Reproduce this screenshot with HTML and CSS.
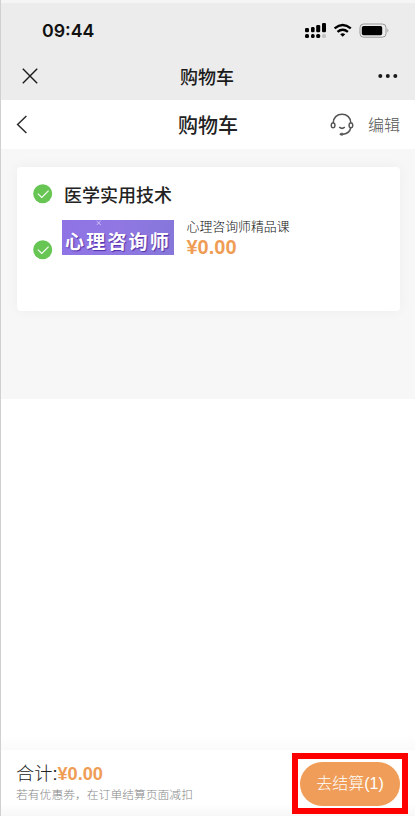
FILE: index.html
```html
<!DOCTYPE html>
<html lang="zh-CN">
<head>
<meta charset="utf-8">
<title>购物车</title>
<link rel="stylesheet" href="styles.css">
</head>
<body>
<div class="screen">
  <div class="status">
    <span class="time">09:44</span>
    <svg class="status-icons" width="86" height="18" viewBox="304 22 86 18">
      <g fill="#000">
        <rect x="305" y="28" width="4" height="4.2" rx="1.3"/><rect x="311" y="27" width="3.6" height="5.2" rx="1.3"/><rect x="316.2" y="25" width="4" height="7.2" rx="1.3"/><rect x="322" y="23" width="4" height="9.2" rx="1.3"/>
        <rect x="305" y="34" width="4" height="4" rx="1.5"/><rect x="311" y="34" width="3.6" height="4" rx="1.5"/><rect x="316.2" y="34" width="4" height="4" rx="1.5"/>
        <path d="M340.2 34.2Q342.7 32.2 345.2 34.2L342.7 36.8Z"/>
        <rect x="361.8" y="26" width="20.4" height="9.2" rx="1.8"/>
      </g>
      <rect x="322" y="34" width="4" height="4" rx="1.5" fill="#c4c4c4"/>
      <g fill="none" stroke="#000" stroke-width="2.4"><path d="M334.6 28.4Q342.7 21.8 350.8 28.4"/><path d="M337.5 31.9Q342.7 27.7 347.9 31.9"/></g>
      <rect x="360" y="24" width="26" height="13.2" rx="3.6" fill="none" stroke="#999"/>
      <path d="M387.4 28.6Q389.4 30.6 387.4 32.6Z" fill="#999"/>
    </svg>
  </div>
  <div class="titlebar">
    <svg width="16" height="16" viewBox="0 0 16 16"><path d="M.8.8 15.2 15.2M15.2.8.8 15.2" stroke="#1a1a1a" stroke-width="1.4"/></svg>
    <span class="app-title">购物车</span>
    <svg width="20" height="6" viewBox="0 0 20 6" fill="#1a1a1a"><circle cx="2.3" cy="3" r="2"/><circle cx="9.8" cy="3" r="2"/><circle cx="17.3" cy="3" r="2"/></svg>
  </div>
  <header class="header">
    <svg class="back" width="12" height="19" viewBox="0 0 12 19"><path d="M10.4 1 1.6 9.5l8.8 8.5" fill="none" stroke="#2b2b2b" stroke-width="1.5"/></svg>
    <h1>购物车</h1>
    <svg class="service" width="24" height="24" viewBox="0 0 24 24" fill="none" stroke="#555" stroke-width="1.5">
      <path d="M3.2 10C3.2 4.5 7 1.3 12 1.3S20.8 4.5 20.8 10M20.8 14.5C20 18.5 17 20.8 13.2 21.3"/>
      <rect x="1.3" y="10" width="3.6" height="4.8" rx="1.7"/><rect x="19.1" y="10" width="3.6" height="4.8" rx="1.7"/>
      <path d="M9.2 14Q12 16.8 14.8 14"/><ellipse cx="11.7" cy="21.2" rx="1.8" ry="1" fill="#555" stroke-width=".8"/>
    </svg>
    <span class="edit">编辑</span>
  </header>
  <main class="cart">
    <section class="card">
      <div class="group">
        <svg width="20" height="20" viewBox="0 0 20 20"><circle cx="9.7" cy="9.7" r="9.5" fill="#67c653"/><path d="m4.8 9.6 4 3.8 6.8-6.7" fill="none" stroke="#fff" stroke-width="1.1"/></svg>
        <h2>医学实用技术</h2>
      </div>
      <div class="item">
        <svg class="item-check" width="20" height="20" viewBox="0 0 20 20"><circle cx="9.7" cy="9.7" r="9.5" fill="#67c653"/><path d="m4.8 9.6 4 3.8 6.8-6.7" fill="none" stroke="#fff" stroke-width="1.1"/></svg>
        <div class="cover">心理咨询师
          <svg class="spark" width="6" height="6" viewBox="0 0 6 6" stroke="#d9cdfb" stroke-width=".8"><path d="M.5 1 5 5M4.8.5.8 5"/></svg>
        </div>
        <div class="info">
          <div class="name">心理咨询师精品课</div>
          <div class="price">¥0.00</div>
        </div>
      </div>
    </section>
  </main>
  <div class="blank"></div>
  <footer class="footer">
    <div class="summary">
      <div class="total">合计:<b>¥0.00</b></div>
      <div class="hint">若有优惠券，在订单结算页面减扣</div>
    </div>
    <div class="highlight"><button>去结算(1)</button></div>
  </footer>
</div>
</body>
</html>
```

FILE: styles.css
```css
* { box-sizing: border-box; }
body {
  margin: 0;
  background: #fff;
  font-family: "Liberation Sans", "Noto Sans CJK SC", sans-serif;
  color: #222;
}
svg { display: block; flex: none; }
h1, h2 { margin: 0; font-weight: 500; font-family: "Noto Sans CJK SC", sans-serif; white-space: nowrap; }
.screen {
  width: 415px;
  height: 816px;
  display: flex;
  flex-direction: column;
  border-left: 1px solid #d0d0d0;
  overflow: hidden;
}
.status {
  height: 53px;
  flex: none;
  border-top: 3px solid #f5f5f5;
  background: #ececec;
  display: flex;
  justify-content: space-between;
  padding: 17px 25px 0 41px;
}
.time { font: 600 17.8px/22px Inter, sans-serif; color: #111; }
.status-icons { margin-top: 2px; }
.titlebar {
  height: 47px;
  flex: none;
  background: #ececec;
  display: grid;
  grid-template-columns: 1fr auto 1fr;
  align-items: center;
  padding: 0 17px 2px 21px;
}
.titlebar svg:last-child { justify-self: end; }
.app-title { font: 500 18px/26px "Noto Sans CJK SC", sans-serif; color: #1a1a1a; margin: 0 5px 0 -1px; }
.header {
  height: 49px;
  flex: none;
  display: flex;
  align-items: center;
  padding-left: 15px;
}
.header h1 { margin-left: 150px; font-size: 20px; line-height: 30px; }
.service { margin-left: 92px; }
.edit { margin: 0 0 1px 14px; font-size: 16px; line-height: 24px; color: #555; font-family: "Noto Sans CJK SC", sans-serif; font-weight: 300; white-space: nowrap; }
.cart { height: 250px; flex: none; background: #f7f7f7; padding: 18px 15px 0 16px; }
.card {
  height: 144px;
  border-radius: 4px;
  background: #fff;
  box-shadow: 0 0 14px rgba(0, 0, 0, .045);
  padding: 13px 16px;
}
.group { display: flex; align-items: center; height: 28px; gap: 11px; }
.group h2 { font-size: 18px; line-height: 26px; }
.item { display: flex; margin-top: 12px; }
.item-check { margin-top: 20px; }
.cover {
  position: relative;
  width: 112px;
  height: 35px;
  flex: none;
  margin-left: 9px;
  padding-left: 3px;
  background: linear-gradient(100deg, #8f73e6, #9077e2 50%, #8577da);
  color: #fff;
  font: 700 19px/41px "Noto Sans CJK SC", sans-serif;
  letter-spacing: 2.2px;
  text-shadow: 1px 1px 1px #5430a8;
  white-space: nowrap;
}
.spark { position: absolute; left: 34px; top: 0; }
.info { margin-left: 12.5px; }
.name { font: 300 12.9px/14px "Noto Sans CJK SC", sans-serif; margin-top: -1px; color: #111; }
.price { font-size: 20px; line-height: 24px; font-weight: 700; color: #ef9d55; margin-top: 2px; }
.blank { flex: 1; background: linear-gradient(to top, #fafafa, #fff 14px); }
.footer {
  height: 66px;
  flex: none;
  display: flex;
  justify-content: space-between;
  padding: 0 7px 0 15px;
  background: linear-gradient(to top, #f7f7f7, #fff 12px);
}
.summary { padding-top: 12px; white-space: nowrap; }
.total { font-size: 18.2px; line-height: 24px; font-weight: 300; }
.total b { color: #ef9d55; font-weight: 700; }
.hint { font-size: 11.8px; line-height: 16px; color: #888; font-weight: 300; margin-top: 1px; }
.highlight {
  width: 116px;
  height: 61px;
  margin-top: 3px;
  border: 6px solid #fe0000;
  background: #fff;
  display: flex;
  align-items: center;
  justify-content: center;
}
button {
  width: 100px;
  height: 44px;
  padding: 0;
  border: 0;
  border-radius: 22px;
  background: #ef9d58;
  color: #fff;
  font: 300 16px/24px "Liberation Sans", "Noto Sans CJK SC", sans-serif;
}
```
